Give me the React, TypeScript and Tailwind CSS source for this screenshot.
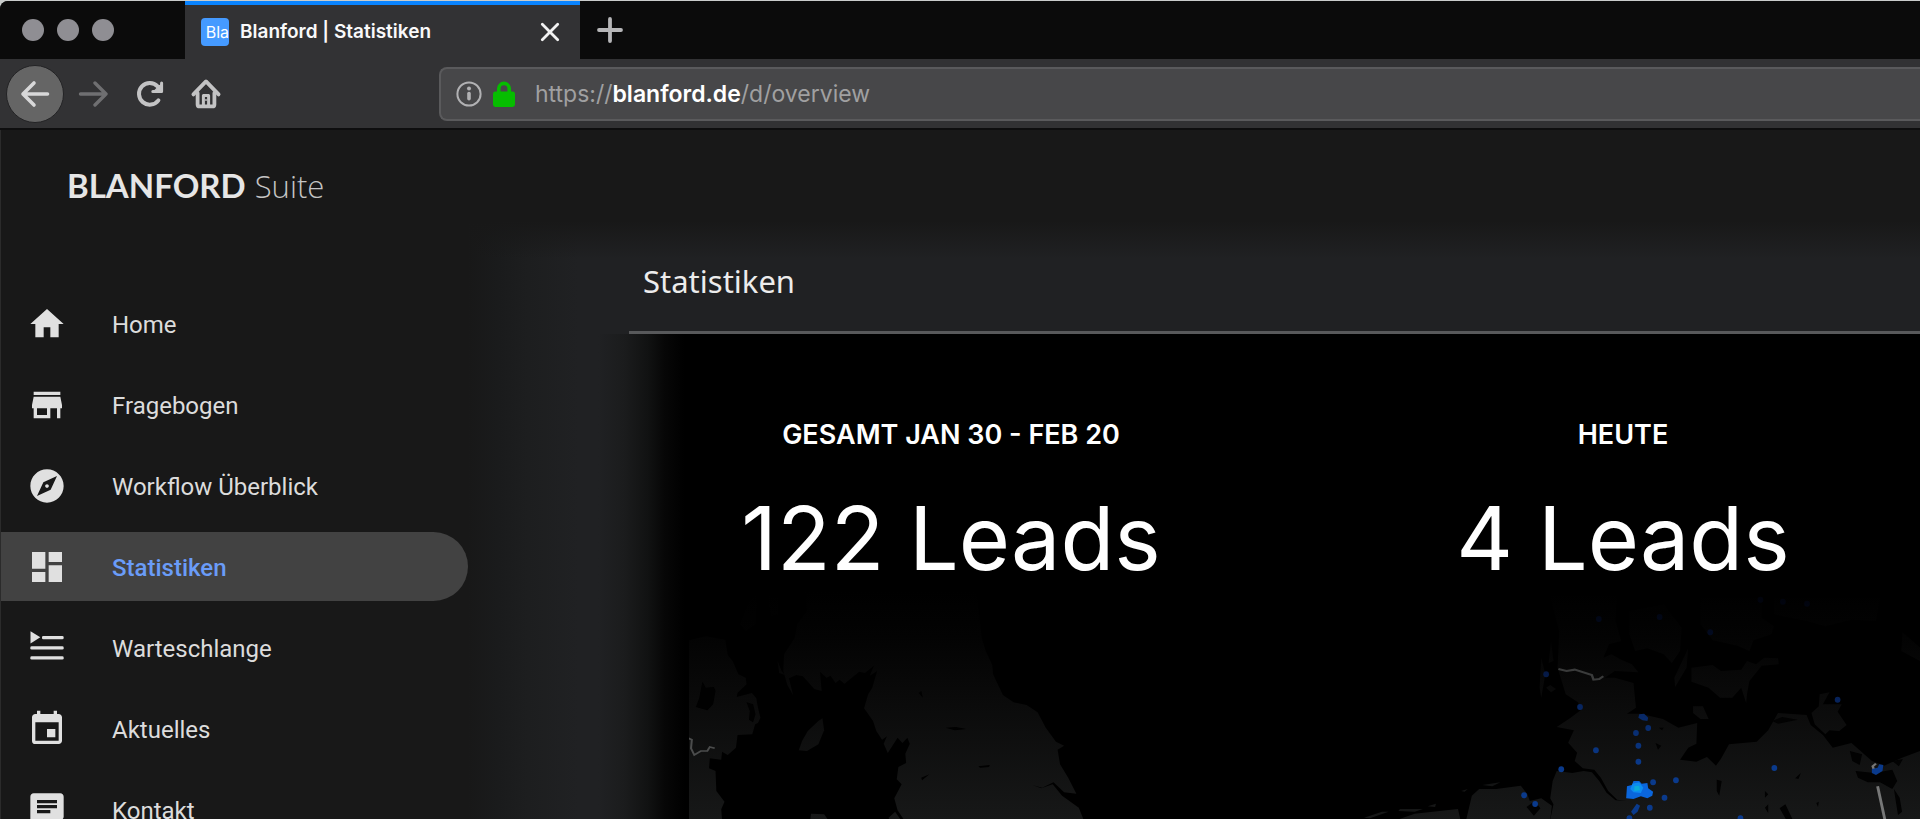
import React from 'react';
import { MdChat, MdDashboard, MdEvent, MdExplore, MdHome, MdStore } from 'react-icons/md';

function QueueIcon() {
  return (
    <svg viewBox="0 0 24 24" fill="currentColor" className="size-10">
      <path d="M2.1 1.9 8 5.6 2.1 9.3z" />
      <rect x="9" y="4.8" width="13" height="2" rx="0.8" />
      <rect x="2" y="10.9" width="20" height="2" rx="0.8" />
      <rect x="2" y="16.9" width="20" height="2" rx="0.8" />
    </svg>
  );
}

const navItems = [
  { label: 'Home', icon: <MdHome className="size-10" /> },
  { label: 'Fragebogen', icon: <MdStore className="size-10" /> },
  { label: 'Workflow Überblick', icon: <MdExplore className="size-10" /> },
  { label: 'Statistiken', icon: <MdDashboard className="size-10" />, active: true },
  { label: 'Warteschlange', icon: <QueueIcon /> },
  { label: 'Aktuelles', icon: <MdEvent className="size-10" /> },
  { label: 'Kontakt', icon: <MdChat className="size-10" /> },
];

function TabStrip() {
  return (
    <div className="flex h-[58px] shrink-0 bg-[#0b0b0b]">
      <div className="flex w-[185px] shrink-0 items-center gap-[13px] pl-[22px]">
        <span className="size-[22px] rounded-full bg-[#8f8e93]" />
        <span className="size-[22px] rounded-full bg-[#8f8e93]" />
        <span className="size-[22px] rounded-full bg-[#8f8e93]" />
      </div>
      <div className="flex w-[395px] shrink-0 items-center border-t-4 border-[#0a84ff] bg-[#323234] pr-5 pl-4">
        <span className="flex h-7 w-7 shrink-0 items-center justify-end rounded-sm bg-[#459aff] text-[16px] text-white">
          Bla
        </span>
        <span className="ml-[11px] flex-1 text-[19px] font-semibold text-[#f9f9fa]">Blanford | Statistiken</span>
        <button type="button" aria-label="Tab schließen">
          <svg viewBox="0 0 20 20" className="size-5 stroke-[#f2f2f2]" strokeWidth="2.8" strokeLinecap="round">
            <path d="M2.3 2.3 17.7 17.7M17.7 2.3 2.3 17.7" />
          </svg>
        </button>
      </div>
      <button type="button" aria-label="Neuer Tab" className="ml-[17px]">
        <svg viewBox="0 0 26 26" className="size-[26px] stroke-[#b6b6b8]" strokeWidth="3.8" strokeLinecap="round">
          <path d="M13 2v22M2 13h22" />
        </svg>
      </button>
    </div>
  );
}

function Toolbar() {
  return (
    <div className="flex h-[71px] shrink-0 items-center border-b-2 border-[#0e0e0f] bg-[#323234]">
      <div className="flex w-[439px] shrink-0 items-center pl-[6px]">
        <button
          type="button"
          aria-label="Zurück"
          className="flex size-[58px] items-center justify-center rounded-full border border-[#232325] bg-[#656565] text-[#d8d8d9]"
        >
          <svg viewBox="0 0 30 30" className="size-[30px] fill-none stroke-current" strokeWidth="3.6" strokeLinecap="round" strokeLinejoin="round">
            <path d="M27.5 15H3M14 4 3 15l11 11" />
          </svg>
        </button>
        <button type="button" aria-label="Vor" className="ml-[14px] text-[#6f6f71]">
          <svg viewBox="0 0 30 30" className="size-[30px] fill-none stroke-current" strokeWidth="3.4" strokeLinecap="round" strokeLinejoin="round">
            <path d="M2.5 15H28M17 4l11 11-11 11" />
          </svg>
        </button>
        <button type="button" aria-label="Neu laden" className="ml-[26px] text-[#c3c3c4]">
          <svg viewBox="0 0 32 32" className="size-8" fill="none" stroke="currentColor" strokeWidth="4" strokeLinecap="round" strokeLinejoin="round">
            <path d="M24.4 22.4A10.8 10.8 0 1 1 23.6 8.4L26 11.4" />
            <path d="M27.6 5v8.4h-8.8" strokeWidth="3" />
            <path d="M26.6 6.8v5.8h-6z" fill="currentColor" strokeWidth="1" />
          </svg>
        </button>
        <button type="button" aria-label="Startseite" className="ml-6 text-[#c3c3c4]">
          <svg viewBox="0 0 32 32" className="size-8" fill="none" stroke="currentColor" strokeWidth="3.8" strokeLinecap="round" strokeLinejoin="round">
            <path d="M3.4 16.4 16 3.4l12.6 13" />
            <path d="M7.6 15V26.4a2 2 0 0 0 2 2h12.8a2 2 0 0 0 2-2V15" />
            <path d="M13.4 27v-9.6h5.2V27" strokeWidth="3" />
            <circle cx="16" cy="22" r="0.9" fill="currentColor" stroke="none" />
          </svg>
        </button>
      </div>
      <div className="flex h-[54px] flex-1 items-center rounded-l-lg border-2 border-r-0 border-[#5a5a5c] bg-[#474749] pl-[15px]">
        <svg viewBox="0 0 26 26" className="size-[26px] shrink-0" fill="none" stroke="#b1b1b3" strokeWidth="2">
          <circle cx="13" cy="13" r="11.6" />
          <path d="M13 12.6v5.2" strokeWidth="3.6" strokeLinecap="round" />
          <circle cx="13" cy="7.6" r="2" fill="#b1b1b3" stroke="none" />
        </svg>
        <svg viewBox="0 0 22 26" className="ml-[11px] h-[26px] w-[22px] shrink-0">
          <path d="M5.8 13V7.6a5.2 5.2 0 0 1 10.4 0V13" fill="none" stroke="#06bd00" strokeWidth="3.6" />
          <rect y="10.6" width="22" height="15.4" rx="2.4" fill="#06bd00" />
        </svg>
        <div role="textbox" aria-label="Adresse" className="ml-5 pt-0.5 text-[23px] whitespace-nowrap text-[#a0a0a1]">
          https://<span className="font-semibold text-white">blanford.de</span>/d/overview
        </div>
      </div>
    </div>
  );
}

function Sidebar() {
  return (
    <nav className="w-[468px] shrink-0 border-l border-[#2b2b2b] pt-[68px] font-['Roboto',sans-serif] text-[24px] text-[#dcdcdc]">
      <ul className="flex flex-col gap-3">
        {navItems.map((item) => (
          <li key={item.label}>
            <a
              href="#"
              aria-current={item.active ? 'page' : undefined}
              className={
                item.active
                  ? 'flex h-[69px] items-center gap-[45px] rounded-r-full bg-[#424242] pl-[26px]'
                  : 'flex h-[69px] items-center gap-[45px] pl-[26px]'
              }
            >
              <span className="text-[#e0e0e0]">{item.icon}</span>
              <span className={item.active ? 'pt-0.5 font-medium text-[#6a9cf8]' : 'pt-0.5'}>{item.label}</span>
            </a>
          </li>
        ))}
      </ul>
    </nav>
  );
}

const leadDots = [
  [652, 340], [735, 438], [774, 568], [689, 625], [872, 516], [902, 501], [878, 554], [878, 602],
  [914, 664], [970, 658], [942, 710], [906, 740], [1211, 621], [1366, 416], [598, 703], [625, 729],
  [1128, 772], [856, 772], [781, 174], [930, 168], [1054, 214], [1177, 116], [1232, 122], [1291, 128],
];

function LeadMap() {
  return (
    <div className="ml-[221px] flex min-h-0 flex-1">
      <svg
        viewBox="689 585 1231 234"
        preserveAspectRatio="xMinYMin slice"
        role="img"
        aria-label="Karte der Leads"
        className="size-full"
      >
        <defs>
          <linearGradient id="land" gradientUnits="userSpaceOnUse" x1="0" y1="90" x2="0" y2="777">
            <stop offset="0" stopColor="#000000" />
            <stop offset="0.2" stopColor="#030303" />
            <stop offset="0.5" stopColor="#0b0b0b" />
            <stop offset="1" stopColor="#171818" />
          </linearGradient>
          <linearGradient id="glow" gradientUnits="userSpaceOnUse" x1="0" y1="90" x2="0" y2="620">
            <stop offset="0" stopColor="#010208" />
            <stop offset="0.25" stopColor="#020a20" />
            <stop offset="0.5" stopColor="#061c4c" />
            <stop offset="1" stopColor="#0a3a8c" />
          </linearGradient>
        </defs>
        <g transform="translate(660 560) scale(0.4082 0.3333)">
          <g fill="url(#land)">
            <path d="M70 238 112 226 160 236 166 282 178 300 192 340 210 350 212 370 190 395 188 408 225 396 236 412 240 440 246 470 240 486 233 490 226 520 190 522 186 560 166 582 152 572 150 596 122 592 120 622 136 630 138 690 158 722 150 745 152 777H70z" />
            <path d="M355 90H775L782 160 788 230 798 270 814 312 816 340 840 402 866 424 898 432 925 454 945 500 970 542 990 554 974 566 980 610 1000 650 1020 698 990 694 964 664 936 680 912 672 934 682 962 670 985 704 1026 740 1038 777H598L582 748 574 712 592 670 580 655 584 618 603 606 601 578 612 548 606 530 594 546 582 530 558 576 548 548 556 526 544 536 530 510 522 480 500 442 510 400 520 380 532 330 514 344 524 314 502 336 488 332 452 368 440 356 430 366 418 344 408 350 392 332 396 390 378 384 350 346 334 342 316 352 326 402 312 372 302 330 304 280 330 230 336 190 360 150z" />
            <path d="M398 472 388 480 362 510 348 540 340 568 360 570 388 550 402 508z" />
            <path d="M288 300 298 330 306 342 292 336zM368 777 370 758 402 760 412 777zM560 770 576 752 590 777H562z" />
            <path d="M215 130 240 92 234 190 210 210 196 190zM262 100 290 110V160L272 166z" opacity="0.6" />
          </g>
          <g fill="#010101">
            <path d="M104 362 112 380 132 378 136 390 130 430 116 448 88 438 96 412zM212 424 228 430 234 460 228 484 218 476 220 450zM700 500 725 498 750 504 722 508zM780 616 808 612 806 618 784 620zM640 650 660 640 642 658zM634 396 640 390 644 410z" />
          </g>
          <path d="M70 532 78 536 76 562 84 582 100 570 116 570 122 558 134 562" fill="none" stroke="#4b4c4c" strokeWidth="5" />
        </g>
        <g transform="translate(1280 560) scale(0.4082 0.3333)">
          <g fill="url(#land)">
            <path d="M660 100 684 210 680 320 700 400 730 424 738 446 712 470 678 498 720 508 706 545 728 575 722 600 742 622 770 626 786 650 804 690 826 716 850 720 822 718 800 695 782 660 764 634 744 630 716 636 678 630 668 660 662 712 670 730 662 777H1568V570L1524 590 1480 614 1450 600 1400 546 1354 560 1330 522 1300 492 1290 462 1220 456 1196 508 1168 542 1100 550 1080 594 1068 614 1046 588 1020 602 980 596 1000 560 1020 548 1022 486 976 500 938 474 882 458 850 458 872 440 866 366 820 350 796 350 820 330 878 334 862 310 836 296 812 280 792 290 806 250 836 240 822 180 826 100z" />
            <path d="M856 150 940 130 984 200 980 270 960 306 940 280 900 262 870 270 856 220z" />
            <path d="M1008 320 1060 312 1080 330 1130 326 1144 300 1166 310 1186 290 1220 292 1222 310 1180 314 1150 360 1144 400 1142 426 1130 380 1108 410 1078 410 1050 380 1008 362z" />
            <path d="M1030 110H1180L1180 170 1210 196 1204 220 1160 238 1150 270 1120 254 1060 238 1030 190z" />
            <path d="M1210 110H1470L1460 180 1400 176 1336 196 1290 180 1210 160zM1525 214 1568 260V300L1522 270z" />
            <path d="M1012 436 1036 436 1050 474 1030 474 1012 456zM1322 400 1346 394 1330 430 1376 430 1366 452 1388 492 1370 510 1346 508 1336 520 1310 490 1302 456 1320 436z" />
            <path d="M1000 262 996 320 968 378 966 350zM470 704 488 684 530 684 590 674 606 700 612 720 640 712 666 734 662 777H456z" />
            <path d="M286 777 330 758 436 744 442 777zM206 770 250 752 266 752 220 772zM294 744 350 744 330 752 290 750zM362 736 382 728 380 738zM444 690 460 684 452 692zM496 672 540 664 520 676z" />
            <path d="M664 240 670 300 658 306zM640 290 650 340 640 410 636 380zM652 380 662 372 676 384 664 394z" />
          </g>
          <g fill="#020202">
            <path d="M604 738 624 720 638 742 622 764zM1410 630 1456 636 1500 626 1512 660 1500 684 1470 664 1440 664 1416 650zM1504 684 1518 710 1524 752 1514 762 1508 716zM1396 570 1426 580 1420 612 1402 600zM1070 656 1082 660 1076 704 1070 690zM1224 742 1238 730 1256 776H1240zM1262 652 1276 636 1270 654zM1188 690 1196 700 1188 710zM1188 740 1196 730V756zM920 546 934 554 926 566zM1500 600 1526 594 1516 616zM1206 480 1230 468 1268 476 1220 488zM928 500 940 500 936 508zM1314 726 1320 722 1318 738z" />
          </g>
          <path d="M682 324 702 330 722 326 764 342 768 356 782 354 792 346" fill="none" stroke="#3a3b3b" strokeWidth="6" />
          <path d="M1464 676 1482 777" stroke="#777878" strokeWidth="7" />
          <path d="M1460 608 1452 616 1456 630" fill="none" stroke="#777" strokeWidth="6" />
          <g fill="url(#glow)">
            {leadDots.map(([x, y]) => (
              <ellipse key={`${x}-${y}`} cx={x} cy={y} rx="7" ry="9" />
            ))}
            <path d="M880 460 892 458 902 470 900 480 888 478 878 470z" />
            <path d="M1450 624 1464 620 1468 610 1478 612 1476 630 1460 642 1450 636z" />
            <path d="M874 728 882 734 876 752 866 762 860 752z" />
          </g>
          <path d="M850 676 862 672 866 660 880 660 886 668 900 666 902 682 914 692 912 704 900 712 884 706 866 714 848 712z" fill="#0a66dc" />
          <path d="M864 668 880 664 890 680 884 696 866 694 858 684z" fill="#0c8cf0" />
          <path d="M868 676 880 674 882 688 868 690z" fill="#0cacd8" />
        </g>
      </svg>
    </div>
  );
}

function Stat({ label, value }: { label: string; value: string }) {
  return (
    <div className="flex flex-col items-center text-white">
      <h2 className="text-[27px] leading-8 font-semibold">{label}</h2>
      <p className="mt-[39px] text-[88px] leading-[96px] whitespace-nowrap">{value}</p>
    </div>
  );
}

function Dashboard() {
  return (
    <main className="flex min-w-0 flex-1 flex-col overflow-hidden bg-[linear-gradient(to_bottom,#181818,rgb(24_24_24/0)_38px),linear-gradient(to_right,#181818,#1a1b1c_30px,#1d1e1f_60px,#202123_110px)]">
      <header className="ml-[161px] h-[113px] shrink-0 border-b-[3px] border-[#58595b] pt-[38px] pl-[14px]">
        <h1 className="font-['Noto_Sans',sans-serif] text-[31px] leading-[44px] text-[#ececec]">Statistiken</h1>
      </header>
      <section className="flex min-h-0 flex-1 flex-col bg-[linear-gradient(to_right,transparent_130px,#1b1c1d_156px,#111212_180px,#070707_196px,#000_216px)]">
        <div className="-mr-[39px] ml-[147px] grid shrink-0 grid-cols-2 pt-[85px]">
          <Stat label="GESAMT JAN 30 - FEB 20" value="122 Leads" />
          <Stat label="HEUTE" value="4 Leads" />
        </div>
        <LeadMap />
      </section>
    </main>
  );
}

export default function App() {
  return (
    <div className="h-screen bg-[#c9cccb] pt-px font-['Inter',sans-serif]">
      <div className="flex h-full flex-col overflow-hidden rounded-tl-lg bg-[#181818]">
        <TabStrip />
        <Toolbar />
        <div className="flex h-[91px] shrink-0 items-baseline gap-[9px] border-l border-[#2b2b2b] pt-[33px] pl-[66px] whitespace-nowrap text-[#e6e6e6]">
          <span className="font-['Lato',sans-serif] text-[33px] leading-[44px] font-bold">BLANFORD</span>
          <span className="font-['Open_Sans',sans-serif] text-[31px] leading-[44px] font-light text-[#c4c4c4]">Suite</span>
        </div>
        <div className="flex min-h-0 flex-1">
          <Sidebar />
          <Dashboard />
        </div>
      </div>
    </div>
  );
}
